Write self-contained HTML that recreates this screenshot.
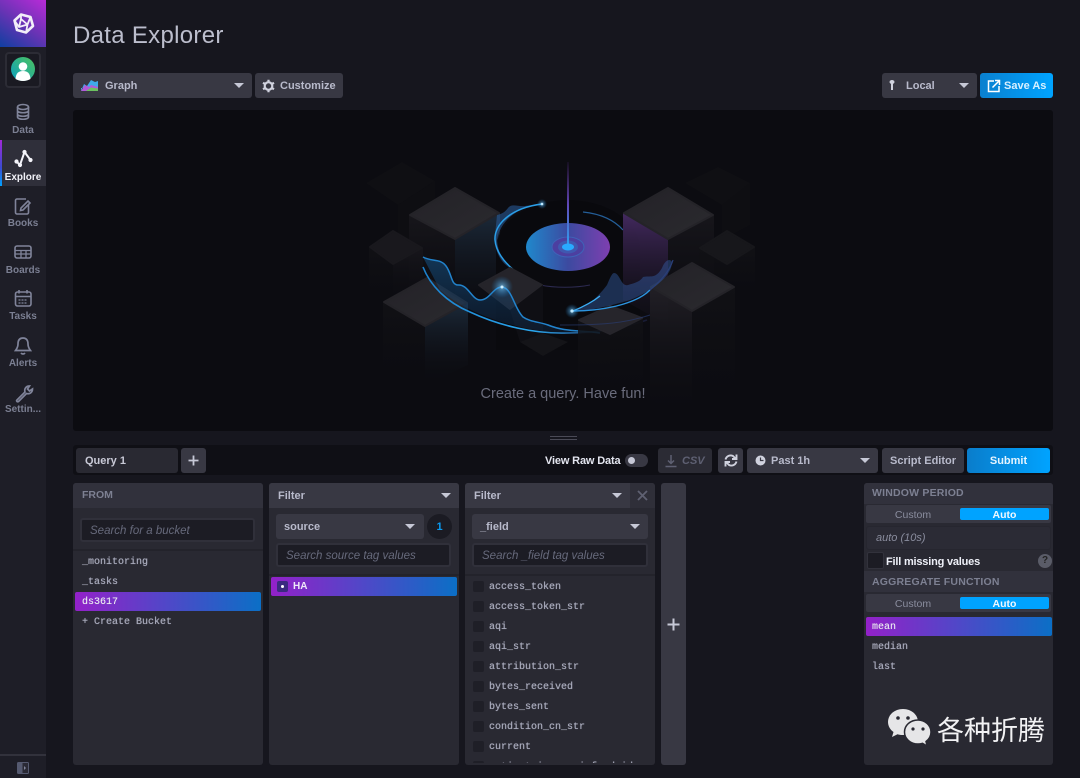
<!DOCTYPE html>
<html><head><meta charset="utf-8"><style>
*{box-sizing:border-box}
html{background:#16161e}
html,body{margin:0;padding:0;width:1080px;height:778px;overflow:hidden;font-family:"Liberation Sans","Noto Sans CJK SC",sans-serif;color:#b8bacb}
body{background:#16161e;filter:blur(.3px)}
.a{position:absolute}
.t{position:absolute;white-space:nowrap;line-height:14px;font-size:11px;font-weight:700;margin-top:1px}
.btn{position:absolute;background:#383843;border-radius:3px}
.p{position:absolute;background:#292932;border-radius:3px;top:483px;height:282px;overflow:hidden}
.hd{position:absolute;left:0;top:0;height:25px;background:#383843}
.in{position:absolute;background:#1c1c24;border:2px solid #30303a;border-radius:3px;height:24px;font-style:italic;font-size:11.500px;color:#676a7c;line-height:22px;padding-left:8px;white-space:nowrap}
.m{position:absolute;font-family:"Liberation Mono",monospace;font-size:10px;line-height:14px;color:#a8aabb;white-space:nowrap;margin-top:2px;text-shadow:0 0 .6px #a8aabb}
.tri{position:absolute;width:0;height:0;border-left:5px solid transparent;border-right:5px solid transparent;border-top:5px solid #c6c8d6}
.line{position:absolute;height:2px;background:#23232b}
.cb{position:absolute;width:11px;height:11px;background:#1f1f27;border-radius:2px}
.side{position:absolute;left:0;width:46px;text-align:center;font-size:10px;font-weight:700;color:#7b7f92;line-height:12px;margin-top:4px}
.sel{position:absolute;background:linear-gradient(90deg,#9321c9,#0b6fc6);border-radius:2px}
</style></head><body>
<!-- sidebar -->
<div class="a" style="left:0;top:0;width:46px;height:778px;background:#1e1e27"></div>
<div class="a" style="left:0;top:0;width:46px;height:47px;background:linear-gradient(35deg,#0f3fa0 0%,#6a33b5 50%,#b92bd8 100%)"></div>
<svg class="a" style="left:0;top:0" width="46" height="47" viewBox="0 0 46 47" fill="none" stroke="#f2eef8" stroke-width="2.600" stroke-linejoin="round"><path d="M21 14.500L30.500 17L33 26L26 32.500L17 30L14.500 20.500Z"/><path d="M21 19L27.500 24.500L19 27ZM21 14.500V19M30.500 17L27.500 24.500L26 32.500M14.500 20.500L19 27" stroke-width="1.800"/></svg>
<div class="a" style="left:5px;top:52px;width:36px;height:36px;border:2px solid #2c2c35;border-radius:4px;background:#1a1a22"></div>
<svg class="a" style="left:11px;top:57px" width="24" height="24" viewBox="0 0 24 24"><defs><linearGradient id="av" x1="0" y1="1" x2="1" y2="0"><stop offset="0" stop-color="#0da0c0"/><stop offset="1" stop-color="#4cc35d"/></linearGradient></defs><circle cx="12" cy="12" r="12" fill="url(#av)"/><circle cx="12" cy="9.500" r="4.300" fill="#fff"/><path d="M4.500 22C5 15.500 8 14 12 14s7 1.500 7.500 8Q12 26 4.500 22Z" fill="#fff"/></svg>
<!-- sidebar icons -->
<svg class="a" style="left:0;top:100px" width="46" height="230" viewBox="0 0 46 230" fill="none" stroke="#80849a" stroke-width="1.600">
<ellipse cx="23" cy="7" rx="5.500" ry="2.500"/><path d="M17.500 7v10c0 3 11 3 11 0V7M17.500 10.500c0 3 11 3 11 0M17.500 14c0 3 11 3 11 0"/>
<path d="M26 99h-9a1.500 1.500 0 0 0-1.500 1.500v12a1.500 1.500 0 0 0 1.500 1.500h10a1.500 1.500 0 0 0 1.500-1.500v-8"/><path d="M21 108l-.5 2.500 2.500-.5 7-7-2-2z"/>
<rect x="15" y="146" width="16" height="12" rx="2"/><path d="M15 150.500h16M21 150.500V158M26 150.500V158M15 154h16" stroke-width="1.300"/>
<rect x="15.500" y="192" width="15.500" height="14" rx="2"/><path d="M15.500 196.500h15.500M19 190v3.500M27 190v3.500"/><path d="M18.500 200h9M18.500 203h9" stroke-dasharray="2 1" stroke-width="1.300"/>
</svg>
<svg class="a" style="left:0;top:330px" width="46" height="80" viewBox="0 0 46 80" fill="none" stroke="#80849a" stroke-width="1.700"><path d="M23 8c-3.500 0-5 2.500-5 6 0 3.500-1.500 5-2.500 6.500h15c-1-1.500-2.500-3-2.500-6.500 0-3.500-1.500-6-5-6zM21 23a2.500 2.500 0 0 0 4 0"/><path d="M17 70l8-8c-1-3 1-6 4.500-6l-2 3 2 2 3-2c0 3.500-3 5.500-6 4.500l-8 8c-1 1-2.500-.5-1.500-1.500z"/></svg>
<div class="side" style="top:121px">Data</div>
<div class="a" style="left:0;top:140px;width:46px;height:46px;background:#2f2f3a"></div>
<div class="a" style="left:0;top:140px;width:2px;height:46px;background:linear-gradient(180deg,#a328d8,#3a4bd0 60%,#00a3ff)"></div>
<svg class="a" style="left:13px;top:148px" width="22" height="20" viewBox="0 0 22 20" fill="none" stroke="#f4f4fa" stroke-width="2"><path d="M3.500 13.500L7 17L11.500 4L17.500 12"/><circle cx="3.500" cy="13.500" r="1.100" fill="#f4f4fa"/><circle cx="7" cy="17" r="1.100" fill="#f4f4fa"/><circle cx="11.500" cy="4" r="1.100" fill="#f4f4fa"/><circle cx="17.500" cy="12" r="1.100" fill="#f4f4fa"/></svg>
<div class="side" style="top:168px;color:#f2f2f8">Explore</div>
<div class="side" style="top:214px">Books</div>
<div class="side" style="top:261px">Boards</div>
<div class="side" style="top:307px">Tasks</div>
<div class="side" style="top:354px">Alerts</div>
<div class="side" style="top:400px">Settin...</div>
<div class="a" style="left:0;top:754px;width:46px;height:2px;background:#32323c"></div>
<svg class="a" style="left:16px;top:761px" width="14" height="14" viewBox="0 0 14 14"><rect x="1" y="1" width="12" height="12" rx="1.500" fill="#555a70"/><rect x="6.500" y="2" width="5.500" height="10" fill="#2a2a35"/><path d="M8 5l2 2-2 2z" fill="#80849a"/></svg>

<!-- title -->
<div class="t" style="left:73px;top:20px;font-size:24px;font-weight:400;line-height:30px;color:#bcbecd;letter-spacing:.3px">Data Explorer</div>

<!-- toolbar -->
<div class="btn" style="left:73px;top:73px;width:179px;height:25px"></div>
<svg class="a" style="left:81px;top:79px" width="18" height="13" viewBox="0 0 18 13"><path d="M0 12L3 5L6 7L10 1L14 3L17 2V9H0Z" fill="#3fa9ea"/><path d="M0 12L4 6L8 8L10 6L17 8V12Z" fill="#b25ad8"/><path d="M5 12L10 8.500L17 9.500V12Z" fill="#6cc160"/></svg>
<div class="t" style="left:105px;top:78px">Graph</div>
<div class="tri" style="left:234px;top:83px"></div>
<div class="btn" style="left:255px;top:73px;width:88px;height:25px"></div>
<svg class="a" style="left:262px;top:79px" width="13" height="14" viewBox="0 0 13 14"><circle cx="6.500" cy="7" r="3.800" fill="none" stroke="#d0d2de" stroke-width="2.200"/><path d="M6.500 .8V3M6.500 11v2.200M1 3.800l2 1.100M10 9.100l2 1.100M1 10.200l2-1.100M10 4.900l2-1.100" stroke="#d0d2de" stroke-width="2.200"/></svg>
<div class="t" style="left:280px;top:78px">Customize</div>
<div class="btn" style="left:882px;top:73px;width:95px;height:25px"></div>
<svg class="a" style="left:888px;top:79px" width="8" height="13" viewBox="0 0 8 13"><ellipse cx="4" cy="3" rx="2.500" ry="2" fill="#d0d2de"/><rect x="3" y="4" width="2" height="7" fill="#d0d2de"/></svg>
<div class="t" style="left:906px;top:78px">Local</div>
<div class="tri" style="left:959px;top:83px"></div>
<div class="a" style="left:980px;top:73px;width:73px;height:25px;border-radius:3px;background:linear-gradient(90deg,#0a80cf,#00a3ff)"></div>
<svg class="a" style="left:987px;top:79px" width="14" height="14" viewBox="0 0 14 14" fill="none" stroke="#fff" stroke-width="1.500"><path d="M7 2H1.500v10.500H12V7"/><path d="M5.500 8.500L12 2M8 1.500h4.500V6" /></svg>
<div class="t" style="left:1004px;top:78px;color:#d8f0ff">Save As</div>

<!-- graph -->
<div class="a" style="left:73px;top:110px;width:980px;height:321px;background:#0c0c11;border-radius:3px"></div>
<svg class="a" style="left:73px;top:110px" width="980" height="321" viewBox="73 110 980 321" fill="none">
<defs>
<linearGradient id="top" x1="0" y1="0" x2="1" y2="1"><stop offset="0" stop-color="#232227"/><stop offset="1" stop-color="#2b2a2f"/></linearGradient>
<linearGradient id="fd" x1="0" y1="0" x2="0" y2="1"><stop offset="0" stop-color="#17161b"/><stop offset="1" stop-color="#0c0c11" stop-opacity="0"/></linearGradient>
<linearGradient id="fd2" x1="0" y1="0" x2="0" y2="1"><stop offset="0" stop-color="#111115"/><stop offset="1" stop-color="#0c0c11" stop-opacity="0"/></linearGradient>
<linearGradient id="fl" x1="0" y1="0" x2="0" y2="1"><stop offset="0" stop-color="#211f25"/><stop offset="1" stop-color="#0c0c11" stop-opacity="0"/></linearGradient>
<linearGradient id="fb" x1="0" y1="0" x2="0" y2="1"><stop offset="0" stop-color="#1c2a3a"/><stop offset="1" stop-color="#0c0c11" stop-opacity="0"/></linearGradient>
<linearGradient id="fp" x1="0" y1="0" x2="0" y2="1"><stop offset="0" stop-color="#43295f"/><stop offset="1" stop-color="#14121a" stop-opacity=".2"/></linearGradient>
<linearGradient id="disc" x1="0" y1="0" x2="1" y2="0"><stop offset="0" stop-color="#1f88cc"/><stop offset=".5" stop-color="#3c4aa0"/><stop offset="1" stop-color="#7e3fb0"/></linearGradient>
<linearGradient id="beam" x1="0" y1="0" x2="0" y2="1"><stop offset="0" stop-color="#6a35a8" stop-opacity=".1"/><stop offset=".5" stop-color="#6048b8"/><stop offset="1" stop-color="#2ca6f4"/></linearGradient>
<linearGradient id="wa" x1="0" y1="0" x2="0" y2="1"><stop offset="0" stop-color="#155d96" stop-opacity=".5"/><stop offset="1" stop-color="#123a6a" stop-opacity=".25"/></linearGradient>
<radialGradient id="glow"><stop offset="0" stop-color="#7fd0ff" stop-opacity=".7"/><stop offset="1" stop-color="#1a80d0" stop-opacity="0"/></radialGradient>
<linearGradient id="arcb" x1="0" y1="0" x2="1" y2="0"><stop offset="0" stop-color="#1c80cc"/><stop offset=".5" stop-color="#2aa8f0"/><stop offset="1" stop-color="#333a80" stop-opacity=".3"/></linearGradient>
</defs>
<!-- far -->
<path d="M366 183L402 162L435 181L398 205Z" fill="#0f0f13"/><path d="M398 205L435 181V235L398 250Z" fill="#0e0e12"/>
<path d="M685 183L718 167L750 183L722 205Z" fill="#0f0f13"/><path d="M722 205L750 183V225L722 240Z" fill="#0e0e12"/>
<!-- left big -->
<path d="M409 215V290L455 315V240Z" fill="url(#fd)"/><path d="M455 240L500 213V290L455 320Z" fill="url(#fb)"/>
<path d="M455 188L499 213L455 239L410 215Z" fill="url(#top)" stroke="#242328" stroke-linejoin="round" stroke-width="2"/>
<!-- small left -->
<path d="M369 247V290L393 305V265Z" fill="url(#fd2)"/><path d="M393 265L423 248V290L393 305Z" fill="url(#fd)"/>
<path d="M393 231L422 248L393 264L370 247Z" fill="#19181d" stroke="#19181d" stroke-linejoin="round" stroke-width="2"/>
<!-- cylinder -->
<ellipse cx="568" cy="250" rx="72" ry="50" fill="#09090d"/><path d="M496 250V350H640V250Z" fill="#0a0a0e"/>
<ellipse cx="568" cy="247" rx="42" ry="24" fill="url(#disc)"/>
<ellipse cx="568" cy="247" rx="16" ry="10" fill="#4c3fa0" stroke="#3f63b8"/>
<ellipse cx="568" cy="247" rx="10" ry="6.500" fill="#4058b0"/>
<rect x="567" y="162" width="2" height="85" fill="url(#beam)"/>
<ellipse cx="568" cy="247" rx="6" ry="3.500" fill="#29aaff"/>
<!-- arcs -->
<path d="M497 215C502 214 505 212 508 208C512 203 518 207 525 206L540 204C515 208 500 222 497 240C498 252 503 262 510 268C500 262 494 250 495 235Z" fill="#2a5a96" opacity=".6"/>
<path d="M542 204C510 208 494 225 495 240C496 252 505 264 520 275" stroke="#2a9fe8" stroke-width="1.500"/>
<path d="M583 212C602 214 615 221 623 230" stroke="#245e98" stroke-width="1.300"/>
<path d="M540 285C555 288 575 288 590 285" stroke="#2c2a50" stroke-width="1"/>
<!-- middle diamond -->
<path d="M510 268L542 285L510 309L479 285Z" fill="#25242a" stroke="#25242a" stroke-linejoin="round" stroke-width="2"/>
<path d="M510 310L543 285V350L520 342Z" fill="#0f0f14"/>
<!-- lower left cube -->
<path d="M383 302V380L425 390V327Z" fill="url(#fd2)"/><path d="M425 327L468 303V365L425 385Z" fill="url(#fb)"/>
<path d="M427 278L467 303L425 326L384 302Z" fill="url(#top)" stroke="#242328" stroke-linejoin="round" stroke-width="2"/>
<!-- bottom small -->
<path d="M543 333L568 342L543 356L520 342Z" fill="#141418"/>
<!-- right big -->
<path d="M623 213V300L668 325V240Z" fill="url(#fp)"/><path d="M668 240L714 215V300L668 330Z" fill="url(#fd)"/>
<path d="M668 188L713 215L668 239L624 213Z" fill="url(#top)" stroke="#242328" stroke-linejoin="round" stroke-width="2"/>
<!-- small right -->
<path d="M699 248V290L727 300V265Z" fill="url(#fd2)"/><path d="M727 265L755 247V290L727 300Z" fill="url(#fd2)"/>
<path d="M727 231L754 247L727 264L700 248Z" fill="#17171b" stroke="#17171b" stroke-linejoin="round" stroke-width="2"/>
<!-- waves -->
<path d="M423 257C432 262 440 258 446 266C452 274 451 285 458 285C468 284 472 300 480 300C490 300 493 287 502 287C512 288 514 308 523 317C530 322 540 322 548 325C565 332 580 330 600 333L570 334C520 331 470 316 440 290Z" fill="url(#wa)"/>
<path d="M423 267C430 285 446 302 470 312C500 326 535 334 567 333C600 333 630 326 647 320" stroke="url(#arcb)" stroke-width="1.600"/>
<path d="M423 257C432 262 440 258 446 266C452 274 451 285 458 285C468 284 472 300 480 300C490 300 493 287 502 287C512 288 514 308 523 317C530 322 540 322 548 325C565 332 580 330 600 333" stroke="#2283cc" stroke-width="1.500"/>
<circle cx="502" cy="287" r="11" fill="url(#glow)"/><circle cx="502" cy="287" r="1.500" fill="#cdeeff"/>
<!-- center right cube -->
<path d="M578 320V395L610 410V335Z" fill="url(#fd2)"/><path d="M610 335L643 316V390L610 410Z" fill="url(#fd2)"/>
<path d="M610 306L642 318L610 334L579 320Z" fill="#26252b" stroke="#26252b" stroke-linejoin="round" stroke-width="2"/>
<path d="M560 325C590 325 620 325 650 315" stroke="#2a3f7a" stroke-width="1" opacity=".6"/>
<!-- lower right cube -->
<path d="M650 287V400L692 420V312Z" fill="url(#fl)"/><path d="M692 312L735 287V390L692 420Z" fill="url(#fd2)"/>
<path d="M692 263L734 287L692 311L651 287Z" fill="url(#top)" stroke="#242328" stroke-linejoin="round" stroke-width="2"/>
<!-- right wave -->
<path d="M573 311C590 306 600 294 607 285C610 278 612 273 614 273C620 273 621 287 628 285C634 283 640 282 643 277C650 275 655 280 662 268C665 260 670 258 672 262C672 275 655 290 630 300C610 306 590 311 573 311Z" fill="#3a6cc0" opacity=".38"/>
<path d="M573 311C600 311 635 305 650 290" stroke="#2c94df" stroke-width="1.400"/>
<path d="M650 290C662 280 670 270 673 260" stroke="#2a3f7a" stroke-width="1.200"/>
<path d="M573 311C585 306 595 300 600 296" stroke="#3aaef5" stroke-width="1.300"/>
<circle cx="572" cy="311" r="7" fill="url(#glow)"/><circle cx="572" cy="311" r="1.600" fill="#bfe9ff"/>
<circle cx="542" cy="204" r="5" fill="url(#glow)"/><circle cx="542" cy="204" r="1.300" fill="#bfe9ff"/>
</svg>
<div class="t" style="left:73px;top:385px;width:980px;text-align:center;font-size:14.500px;font-weight:400;line-height:16px;color:#6a6c7c">Create a query. Have fun!</div>

<!-- handle -->
<div class="a" style="left:550px;top:436px;width:27px;height:1px;background:#4a4a56"></div>
<div class="a" style="left:550px;top:439px;width:27px;height:1px;background:#4a4a56"></div>

<!-- query bar -->
<div class="a" style="left:73px;top:445px;width:980px;height:30px;background:#0f0f15;border-radius:3px"></div>
<div class="btn" style="left:76px;top:448px;width:102px;height:25px;background:#292932"></div>
<div class="t" style="left:85px;top:453px;color:#c8c9d6">Query 1</div>
<div class="btn" style="left:181px;top:448px;width:25px;height:25px"></div>
<svg class="a" style="left:188px;top:455px" width="11" height="11"><path d="M5.500 .5v10M.5 5.500h10" stroke="#c6c8d6" stroke-width="1.800"/></svg>
<div class="t" style="left:545px;top:453px;color:#e4e6f0;letter-spacing:-.15px">View Raw Data</div>
<div class="a" style="left:625px;top:454px;width:23px;height:13px;border-radius:7px;background:#383843"></div>
<div class="a" style="left:628px;top:457px;width:7px;height:7px;border-radius:50%;background:#c6c8d6"></div>
<div class="btn" style="left:658px;top:448px;width:54px;height:25px;background:#2b2b34"></div>
<svg class="a" style="left:664px;top:454px" width="14" height="14" viewBox="0 0 14 14" fill="none" stroke="#5e6072" stroke-width="1.500"><path d="M7 1v8M4 6.500L7 9.500L10 6.500M1.500 12.500h11"/></svg>
<div class="t" style="left:682px;top:453px;font-style:italic;font-weight:700;color:#5e6072">CSV</div>
<div class="btn" style="left:718px;top:448px;width:25px;height:25px"></div>
<svg class="a" style="left:724px;top:453px" width="14" height="15" viewBox="0 0 14 15" fill="none" stroke="#d0d2de" stroke-width="1.900"><path d="M1.500 6.500C2.500 3 6 1.500 9 3L11.500 5.500M12.500 8.500C11.500 12 8 13.500 5 12L2.500 9.500"/><path d="M12.500 1.500V6H8M1.500 13.500V9H6"/></svg>
<div class="btn" style="left:747px;top:448px;width:131px;height:25px"></div>
<svg class="a" style="left:755px;top:455px" width="11" height="11" viewBox="0 0 11 11"><circle cx="5.500" cy="5.500" r="5" fill="#d0d2de"/><path d="M5.500 2.500V5.500H8.500" stroke="#383843" stroke-width="1.200" fill="none"/></svg>
<div class="t" style="left:771px;top:453px">Past 1h</div>
<div class="tri" style="left:860px;top:458px"></div>
<div class="btn" style="left:882px;top:448px;width:82px;height:25px"></div>
<div class="t" style="left:890px;top:453px">Script Editor</div>
<div class="a" style="left:967px;top:448px;width:83px;height:25px;border-radius:3px;background:linear-gradient(90deg,#0a7dcb,#00a3ff)"></div>
<div class="t" style="left:967px;top:453px;width:83px;text-align:center;color:#e4f4ff">Submit</div>

<!-- FROM -->
<div class="p" style="left:73px;width:190px">
<div class="hd" style="width:190px;background:#31313c"></div>
<div class="t" style="left:9px;top:4px;color:#7d8092;font-size:10.500px">FROM</div>
<div class="in" style="left:7px;top:35px;width:175px">Search for a bucket</div>
<div class="line" style="left:0;top:66px;width:190px"></div>
<div class="m" style="left:9px;top:71px">_monitoring</div>
<div class="m" style="left:9px;top:91px">_tasks</div>
<div class="sel" style="left:2px;top:109px;width:186px;height:19px"></div>
<div class="m" style="left:9px;top:111px;color:#f0eaf8">ds3617</div>
<div class="m" style="left:9px;top:131px">+ Create Bucket</div>
</div>

<!-- Filter 1 -->
<div class="p" style="left:269px;width:190px">
<div class="hd" style="width:190px"></div>
<div class="t" style="left:9px;top:5px">Filter</div>
<div class="tri" style="left:172px;top:10px"></div>
<div class="btn" style="left:7px;top:31px;width:148px;height:25px"></div>
<div class="t" style="left:15px;top:36px">source</div>
<div class="tri" style="left:136px;top:41px"></div>
<div class="a" style="left:158px;top:31px;width:25px;height:25px;border-radius:50%;background:#1b1b23"></div>
<div class="t" style="left:158px;top:36px;width:25px;text-align:center;color:#0a9af0">1</div>
<div class="in" style="left:7px;top:60px;width:175px">Search source tag values</div>
<div class="line" style="left:0;top:91px;width:190px"></div>
<div class="sel" style="left:2px;top:94px;width:186px;height:19px"></div>
<div class="a" style="left:8px;top:98px;width:11px;height:11px;background:#3b2a80;border-radius:2px"></div>
<div class="a" style="left:12px;top:102px;width:3px;height:3px;background:#fff;border-radius:50%"></div>
<div class="t" style="left:24px;top:96px;font-size:10px;color:#eee8f8">HA</div>
</div>

<!-- Filter 2 -->
<div class="p" style="left:465px;width:190px">
<div class="hd" style="width:165px"></div>
<div class="hd" style="left:165px;width:25px;background:#2f2f39"></div>
<div class="t" style="left:9px;top:5px">Filter</div>
<div class="tri" style="left:147px;top:10px"></div>
<svg class="a" style="left:172px;top:7px" width="11" height="11"><path d="M1 1l9 9M10 1l-9 9" stroke="#5f6172" stroke-width="1.800"/></svg>
<div class="btn" style="left:7px;top:31px;width:176px;height:25px"></div>
<div class="t" style="left:15px;top:36px">_field</div>
<div class="tri" style="left:165px;top:41px"></div>
<div class="in" style="left:7px;top:60px;width:176px">Search _field tag values</div>
<div class="line" style="left:0;top:91px;width:190px"></div>
<div class="a" style="left:0;top:0;width:190px;height:280px;overflow:hidden">
<div class="cb" style="left:8px;top:98px"></div><div class="m" style="left:24px;top:96px">access_token</div>
<div class="cb" style="left:8px;top:118px"></div><div class="m" style="left:24px;top:116px">access_token_str</div>
<div class="cb" style="left:8px;top:138px"></div><div class="m" style="left:24px;top:136px">aqi</div>
<div class="cb" style="left:8px;top:158px"></div><div class="m" style="left:24px;top:156px">aqi_str</div>
<div class="cb" style="left:8px;top:178px"></div><div class="m" style="left:24px;top:176px">attribution_str</div>
<div class="cb" style="left:8px;top:198px"></div><div class="m" style="left:24px;top:196px">bytes_received</div>
<div class="cb" style="left:8px;top:218px"></div><div class="m" style="left:24px;top:216px">bytes_sent</div>
<div class="cb" style="left:8px;top:238px"></div><div class="m" style="left:24px;top:236px">condition_cn_str</div>
<div class="cb" style="left:8px;top:258px"></div><div class="m" style="left:24px;top:256px">current</div>
<div class="cb" style="left:8px;top:278px"></div><div class="m" style="left:24px;top:276px">extinct_in_raw_info_dsid</div>
</div>
</div>

<!-- plus column -->
<div class="btn" style="left:661px;top:483px;width:25px;height:282px"></div>
<svg class="a" style="left:667px;top:618px" width="13" height="13"><path d="M6.500 .5v12M.5 6.500h12" stroke="#c6c8d6" stroke-width="2"/></svg>

<!-- right panel -->
<div class="p" style="left:864px;width:189px">
<div class="a" style="left:0;top:0;width:189px;height:21px;background:#31313c"></div>
<div class="t" style="left:8px;top:2px;font-size:10.500px;color:#7d8092;letter-spacing:.2px">WINDOW PERIOD</div>
<div class="a" style="left:2px;top:22px;width:185px;height:18px;background:#383843;border-radius:2px"></div>
<div class="t" style="left:2px;top:24px;width:94px;text-align:center;font-size:10.500px;font-weight:400;color:#8a8d9e">Custom</div>
<div class="a" style="left:96px;top:25px;width:89px;height:12px;background:#00a3ff;border-radius:2px"></div>
<div class="t" style="left:96px;top:24px;width:89px;text-align:center;font-size:10.500px;color:#f0f8ff">Auto</div>
<div class="a" style="left:2px;top:43px;width:185px;height:24px;background:#2b2b35;border:1px solid #26262f;border-radius:3px"></div>
<div class="t" style="left:12px;top:47px;font-style:italic;font-weight:400;color:#8a8d9e">auto (10s)</div>
<div class="a" style="left:3px;top:69px;width:17px;height:17px;background:#1c1c24;border:1px solid #32323c;border-radius:2px"></div>
<div class="t" style="left:22px;top:71px;color:#eef0f8;letter-spacing:-.2px">Fill missing values</div>
<div class="a" style="left:174px;top:71px;width:14px;height:14px;border-radius:50%;background:#5a5c68;color:#222;font-size:10px;font-weight:700;text-align:center;line-height:14px">?</div>
<div class="a" style="left:0;top:88px;width:189px;height:21px;background:#31313c"></div>
<div class="t" style="left:8px;top:91px;font-size:10.500px;color:#7d8092;letter-spacing:.2px">AGGREGATE FUNCTION</div>
<div class="a" style="left:2px;top:111px;width:185px;height:18px;background:#383843;border-radius:2px"></div>
<div class="t" style="left:2px;top:113px;width:94px;text-align:center;font-size:10.500px;font-weight:400;color:#8a8d9e">Custom</div>
<div class="a" style="left:96px;top:114px;width:89px;height:12px;background:#00a3ff;border-radius:2px"></div>
<div class="t" style="left:96px;top:113px;width:89px;text-align:center;font-size:10.500px;color:#f0f8ff">Auto</div>
<div class="sel" style="left:2px;top:134px;width:186px;height:19px"></div>
<div class="m" style="left:8px;top:136px;color:#f0eaf8">mean</div>
<div class="m" style="left:8px;top:156px">median</div>
<div class="m" style="left:8px;top:176px">last</div>
</div>

<!-- watermark -->
<svg class="a" style="left:886px;top:706px" width="48" height="42" viewBox="886 706 48 42">
<path d="M903 709c-8.500 0-15 5.800-15 13 0 4 2 7.500 5.500 10l-1.500 5 5.500-2.800c1.800.5 3.600.8 5.500.8 8.500 0 15-5.800 15-13s-6.500-13-15-13z" fill="#e6e6e8"/>
<path d="M918 720c-7.500 0-13.500 5.300-13.500 12s6 12 13.500 12c1.500 0 3-.2 4.500-.7l4.500 2.700-1-4.500c3-2.200 5-5.600 5-9.500 0-6.700-6-12-13-12z" fill="#e6e6e8" stroke="#292932" stroke-width="1.500"/>
<circle cx="898" cy="718" r="1.800" fill="#292932"/><circle cx="908" cy="718" r="1.800" fill="#292932"/>
<circle cx="913" cy="729" r="1.600" fill="#292932"/><circle cx="923" cy="729" r="1.600" fill="#292932"/>
</svg>
<div class="a" style="left:937px;top:714px;font-size:27px;line-height:34px;color:#f2f2f4;white-space:nowrap;font-family:'Liberation Sans','Noto Sans CJK SC',sans-serif">各种折腾</div>
</body></html>
